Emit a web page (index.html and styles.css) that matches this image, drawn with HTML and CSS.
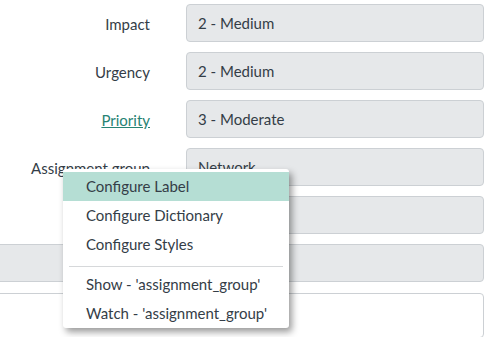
FILE: index.html
```html
<!DOCTYPE html>
<html lang="en">
<head>
    <meta charset="UTF-8">
    <title>Incident</title>
    <link rel="stylesheet" href="styles.css">
</head>
<body>
    <div class="form">
        <div class="row">
            <label class="label">Impact</label>
            <div class="field">2 - Medium</div>
        </div>
        <div class="row">
            <label class="label">Urgency</label>
            <div class="field">2 - Medium</div>
        </div>
        <div class="row">
            <label class="label"><a href="#" class="link">Priority</a></label>
            <div class="field">3 - Moderate</div>
        </div>
        <div class="row">
            <label class="label">Assignment group</label>
            <div class="field">Network</div>
        </div>
        <div class="row">
            <label class="label"></label>
            <div class="field"></div>
        </div>
        <div class="wide field"></div>
        <div class="wide notes"></div>
    </div>

    <ul class="context-menu">
        <li class="active">Configure Label</li>
        <li>Configure Dictionary</li>
        <li>Configure Styles</li>
        <li class="sep"></li>
        <li>Show - 'assignment_group'</li>
        <li>Watch - 'assignment_group'</li>
    </ul>
</body>
</html>
```

FILE: styles.css
```css
body {
    margin: 0;
    font-family: Lato, "Noto Sans", sans-serif;
    font-size: 15px;
    color: #343d47;
    background: #fff;
    overflow: hidden;
}
.form {
    padding-top: 4px;
    width: 484px;
}
.row {
    display: grid;
    grid-template-columns: 150px 1fr;
    column-gap: 36px;
    align-items: center;
    margin-bottom: 10px;
}
.label {
    text-align: right;
    padding-top: 1px;
}
.link {
    color: #278374;
    text-decoration: underline;
}
.field {
    height: 38px;
    box-sizing: border-box;
    background: #e6e8ea;
    border: 1px solid #ccd0d4;
    border-radius: 4px;
    padding: 0 11px;
    line-height: 36px;
}
.wide {
    margin-left: -4px;
}
.notes {
    margin-top: 11px;
    height: 45px;
    box-sizing: border-box;
    border: 1px solid #ccd0d4;
    border-radius: 4px;
}
.context-menu {
    position: absolute;
    left: 63px;
    top: 169px;
    width: 226px;
    margin: 0;
    padding: 3px 0 0;
    list-style: none;
    background: #fff;
    border-radius: 3px;
    box-shadow: 3px 4px 7px rgba(0, 0, 0, 0.4);
}
.context-menu li {
    height: 29px;
    line-height: 29px;
    padding-left: 23px;
    color: #343d47;
}
.context-menu li.active {
    background: #b5ded4;
}
.context-menu li.sep {
    height: 0;
    line-height: 0;
    margin: 7px 6px 3px;
    padding: 0;
    border-top: 1px solid #d6d8da;
}
```
